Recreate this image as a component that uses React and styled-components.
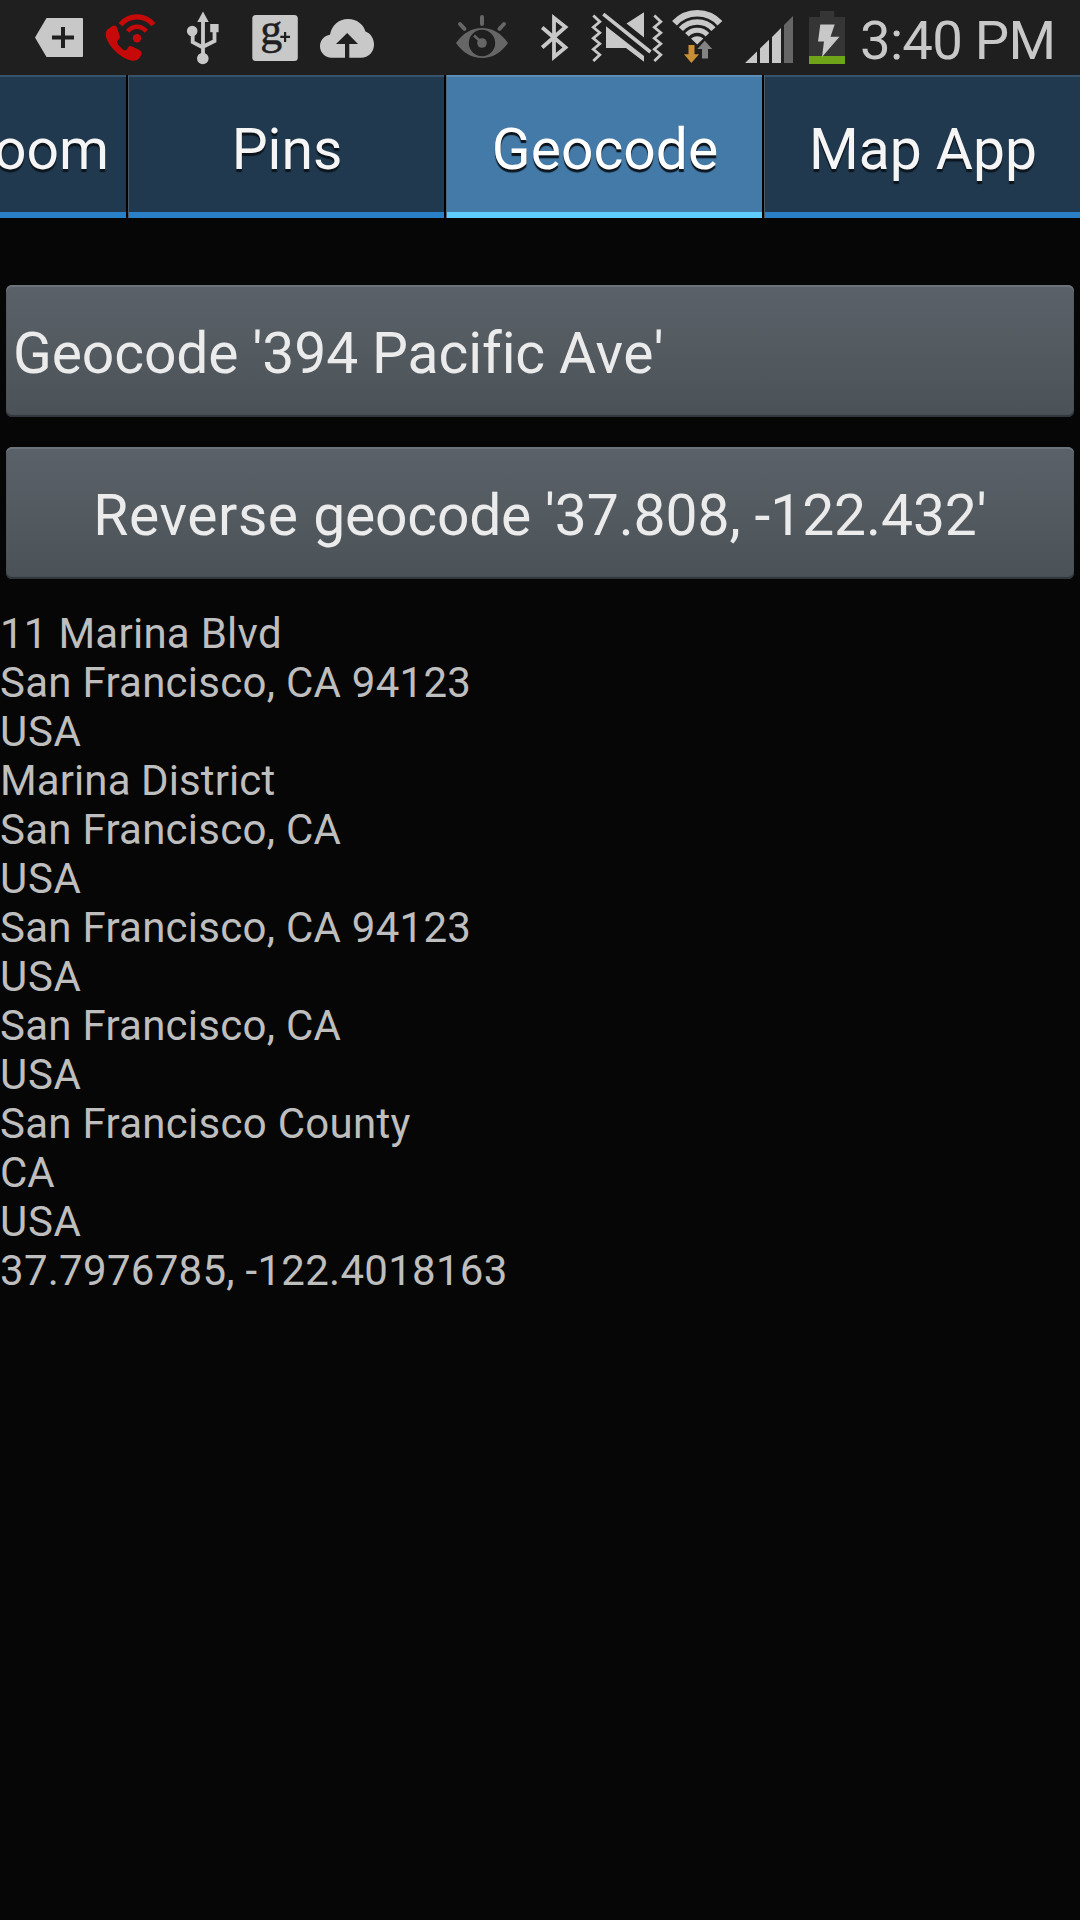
import React from "react";
import styled, { createGlobalStyle, css } from "styled-components";

const GlobalStyle = createGlobalStyle`
  html, body { margin: 0; padding: 0; background: #060606; }
  body { overflow: hidden; }
`;

const Screen = styled.div`
  width: 1080px;
  height: 1920px;
  display: flex;
  flex-direction: column;
  background: #060606;
  font-family: Roboto, "Noto Sans", sans-serif;
  overflow: hidden;
`;

const StatusBar = styled.header`
  height: 75px;
  flex: none;
  display: flex;
  background: #1f1f1f;
  color: #c8c8c8;
`;

const Glyph = styled.svg`
  display: block;
  flex: none;
  width: ${(p) => p.$width}px;
  height: 75px;
`;

const Clock = styled.time`
  padding-left: 9px;
  font-size: 54.5px;
  line-height: 80px;
  letter-spacing: -0.75px;
  white-space: nowrap;
`;

const TabStrip = styled.nav`
  height: 143px;
  flex: none;
  display: flex;
  background: #000;
`;

const Tab = styled.button`
  box-sizing: border-box;
  flex: none;
  width: ${(p) => (p.$clipped ? 128 : p.$last ? 316 : 318)}px;
  height: 143px;
  margin: 0;
  padding: ${(p) => (p.$clipped ? "6px 17px 0 0" : "6px 0 0 2px")};
  display: flex;
  align-items: center;
  justify-content: ${(p) => (p.$clipped ? "flex-end" : "center")};
  overflow: hidden;
  border: 0 solid #000;
  border-right-width: ${(p) => (p.$last ? 0 : 2)}px;
  font: 400 57px/67px Roboto, "Noto Sans", sans-serif;
  color: #f5f5f5;
  text-shadow: 0 3px 1px #0c151d;
  background: #20394e;
  box-shadow: inset ${(p) => (p.$clipped ? 0 : 1)}px 0 0 #4b5a66, inset 0 -6px 0 #2a80c6, inset 0 2px 0 #36536a;
  ${(p) =>
    p.$active &&
    css`
      color: #fff;
      background: #447aa8;
      box-shadow: inset 1px 0 0 #4b6a82, inset 0 -6px 0 #5eccfd, inset 0 2px 0 #5d8fb9;
    `}
`;

const Content = styled.main`
  display: flex;
  flex-direction: column;
  padding-top: 67px;
`;

const Actions = styled.div`
  display: flex;
  flex-direction: column;
  gap: 30px;
  padding: 0 6px;
`;

const ActionButton = styled.button`
  box-sizing: border-box;
  height: 132px;
  margin: 0;
  padding: 4px 8px 0 ${(p) => (p.$centered ? 8 : 7)}px;
  display: flex;
  align-items: center;
  justify-content: ${(p) => (p.$centered ? "center" : "flex-start")};
  border: 0;
  border-radius: 6px;
  background: linear-gradient(#5a6168, #535a60 50%, #4a5157);
  box-shadow: inset 0 2px 0 #6b737b, inset 0 -2px 1px #30363b;
  font: 400 57px/67px Roboto, "Noto Sans", sans-serif;
  color: #ebebeb;
  white-space: pre;
`;

const Word = styled.span`
  letter-spacing: ${(p) => p.$tracking}px;
`;

const Results = styled.div`
  margin-top: 30px;
  font-size: 42px;
  line-height: 49px;
  color: #bebebe;
`;

const ResultLine = styled.p`
  margin: 0;
  white-space: pre;
  letter-spacing: ${(p) => p.$tracking}px;
`;

const lines = [
  ["11 Marina Blvd", 0.26],
  ["San Francisco, CA 94123", 0.26],
  ["USA", 0.7],
  ["Marina District", 0.1],
  ["San Francisco, CA", 0.26],
  ["USA", 0.7],
  ["San Francisco, CA 94123", 0.26],
  ["USA", 0.7],
  ["San Francisco, CA", 0.26],
  ["USA", 0.7],
  ["San Francisco County", 0.28],
  ["CA", 0],
  ["USA", 0.7],
  ["37.7976785, -122.4018163", 0.28],
];

const Icon = ({ from, to, children }) => (
  <Glyph $width={to - from} viewBox={`${from} 0 ${to - from} 75`} fill="#c8c8c8" aria-hidden="true">
    {children}
  </Glyph>
);

const ZIGZAG_Y = [15.5, 21.8, 27.3, 32.8, 38.2, 43.7, 49.2, 54.7, 61];
const zigzag = (x) => ZIGZAG_Y.map((y, i) => `${i % 2 ? x + 6.5 : x},${y}`).join(" ");

const arc = (cx, cy, r, dx, dy) =>
  `M${cx - r * dx} ${cy - r * dy}A${r} ${r} 0 0 1 ${cx + r * dx} ${cy - r * dy}`;

const StatusIcons = () => (
  <>
    <Icon from={0} to={96}>
      <path d="M35 37.5 46.5 18H82q1 0 1 1V56q0 1-1 1H46.5Z" />
      <path d="M52 35.6h9V27h4v8.6h9v4h-9V48h-4v-8.400h-9Z" fill="#1f1f1f" />
    </Icon>
    <Icon from={96} to={176}>
      <g fill="#c60909" stroke="none">
        <path d="M107.500 29.500 112.500 26Q115.500 24.500 117 27.500L119.700 35.500Q120.500 38.500 118 40.300C115.500 42 118.500 45.500 121.500 48.200C124.500 51 126.500 51 127.500 48.500Q129 45 132 46.500L139.500 50Q142.500 51.500 141.300 55L139.500 58Q137 61.500 132 60.700C121 58.500 110.500 48.500 106.500 38.500Q104.300 32.500 107.500 29.500Z" />
        <circle cx="137" cy="38.300" r="4.200" />
        <path d={arc(137, 38.3, 21.5, 0.77, 0.638)} fill="none" stroke="#c60909" strokeWidth="5.200" />
        <path d={arc(137, 38.3, 11.6, 0.8, 0.6)} fill="none" stroke="#c60909" strokeWidth="4.600" />
      </g>
    </Icon>
    <Icon from={176} to={236}>
      <path d="M203 11.500 208.700 22H197.300Z" />
      <circle cx="192.200" cy="31" r="5.300" />
      <circle cx="202.800" cy="58.500" r="5.800" />
      <path d="M210.200 24h8.400v8.200h-8.400Z" />
      <path d="M203 20V56M192.700 33V42.200L203 47.500M214.500 31V41L203 46.800" fill="none" stroke="#c8c8c8" strokeWidth="3.800" />
    </Icon>
    <Icon from={236} to={308}>
      <rect x="252.300" y="15" width="45.500" height="46" rx="3.500" />
      <text x="260.300" y="43.600" fontFamily="Liberation Serif, serif" fontSize="44" fill="#1f1f1f" stroke="#1f1f1f" strokeWidth="0.500">g</text>
      <path d="M280.300 35.800h3.700V32h2.200v3.800h3.800v2.200h-3.800v3.900h-2.200V38h-3.700Z" fill="#1f1f1f" />
    </Icon>
    <Icon from={308} to={450}>
      <path d="M331.500 57.800C325 57.800 320 52.500 320 46.300C320 40 324.500 35.500 330 34.800C331.500 25.500 338.500 19 348 19C357 19 363.500 24.500 365.500 31.500C371 33.500 374 39 374 44.500C374 52 368.500 57.800 361 57.800H349.300V44H358L347.200 33 336 44H345V57.800Z" />
    </Icon>
    <Icon from={450} to={530}>
      <path d="M456 43C463 33 472 28 482 28S501 33 508 43C501 53 492 58 482 58S463 53 456 43Z" fill="#666" />
      <circle cx="482" cy="43" r="13.200" fill="#1f1f1f" />
      <circle cx="482" cy="43" r="4.800" fill="#666" />
      <path d="M474 35.500 479.500 40.500" stroke="#666" strokeWidth="2.600" />
      <path d="M482 17V24M460 24 464.500 28.800M504 24 499.500 28.800" stroke="#666" strokeWidth="4" strokeLinecap="round" />
    </Icon>
    <Icon from={530} to={585}>
      <path d="M542.200 27.500 565.500 47.500 554 57V18L565.500 27 542.200 47.500" fill="none" stroke="#c8c8c8" strokeWidth="3.800" />
    </Icon>
    <Icon from={585} to={668}>
      <g fill="none" stroke="#c8c8c8" strokeWidth="2.800">
        <polyline points={zigzag(593.3)} />
        <polyline points={zigzag(654.3)} />
        <path d="M603.300 14.200 650.500 52" strokeWidth="3.600" />
      </g>
      <path d="M626.500 23.500 644 12.300V37.500ZM606 26.300 644 56V61.700L626 48H606Z" />
    </Icon>
    <Icon from={668} to={735}>
      <g fill="none" stroke="#c8c8c8">
        <path d={arc(697.2, 44, 30.7, 0.74, 0.673)} strokeWidth="6.600" />
        <path d={arc(697.2, 44, 22, 0.74, 0.673)} strokeWidth="5.600" />
        <path d={arc(697.2, 44, 13.8, 0.74, 0.673)} strokeWidth="5" />
      </g>
      <path d="M697.200 44.500 691 38.400Q697.200 34 703.400 38.400Z" />
      <g stroke="#1f1f1f" strokeWidth="2" paintOrder="stroke">
        <path d="M704.800 40.700 712.200 49H708V58.500H702V49H697.300Z" fill="#838383" />
        <path d="M688.500 45H694.500V54.300H699L691.400 63 684 54.300H688.500Z" fill="#ca8f35" />
      </g>
    </Icon>
    <Icon from={735} to={801}>
      <path d="M745 63 757 51.500V63ZM760 63V48.500L769 39.700V63ZM772 63V37L781 28V63Z" />
      <path d="M784 63V25L793 16V63Z" fill="#666" />
    </Icon>
    <Icon from={801} to={851}>
      <path d="M820 11H834.300V17H845V64H809V17H820Z" fill="#353535" />
      <path d="M809 56H845V64H809Z" fill="#6fa318" />
      <path d="M820.300 24.500H834.700L830.500 36.800H839.500L822 57 824 41.500H818Z" />
    </Icon>
  </>
);

export default function App() {
  return (
    <>
      <GlobalStyle />
      <Screen>
        <StatusBar>
          <StatusIcons />
          <Clock>3:40 PM</Clock>
        </StatusBar>
        <TabStrip>
          <Tab $clipped>oom</Tab>
          <Tab>Pins</Tab>
          <Tab $active>Geocode</Tab>
          <Tab $last>Map App</Tab>
        </TabStrip>
        <Content>
          <Actions>
            <ActionButton>
              <Word $tracking={-0.12}>Geocode '394 Pacific </Word>
              <Word $tracking={0.6}>Ave'</Word>
            </ActionButton>
            <ActionButton $centered>
              <Word $tracking={0.55}>Reverse </Word>
              <Word $tracking={-0.25}>geocode </Word>
              <Word $tracking={-0.1}>'37.808, -122.432'</Word>
            </ActionButton>
          </Actions>
          <Results>
            {lines.map(([line, tracking], i) => (
              <ResultLine key={i} $tracking={tracking}>{line}</ResultLine>
            ))}
          </Results>
        </Content>
      </Screen>
    </>
  );
}
